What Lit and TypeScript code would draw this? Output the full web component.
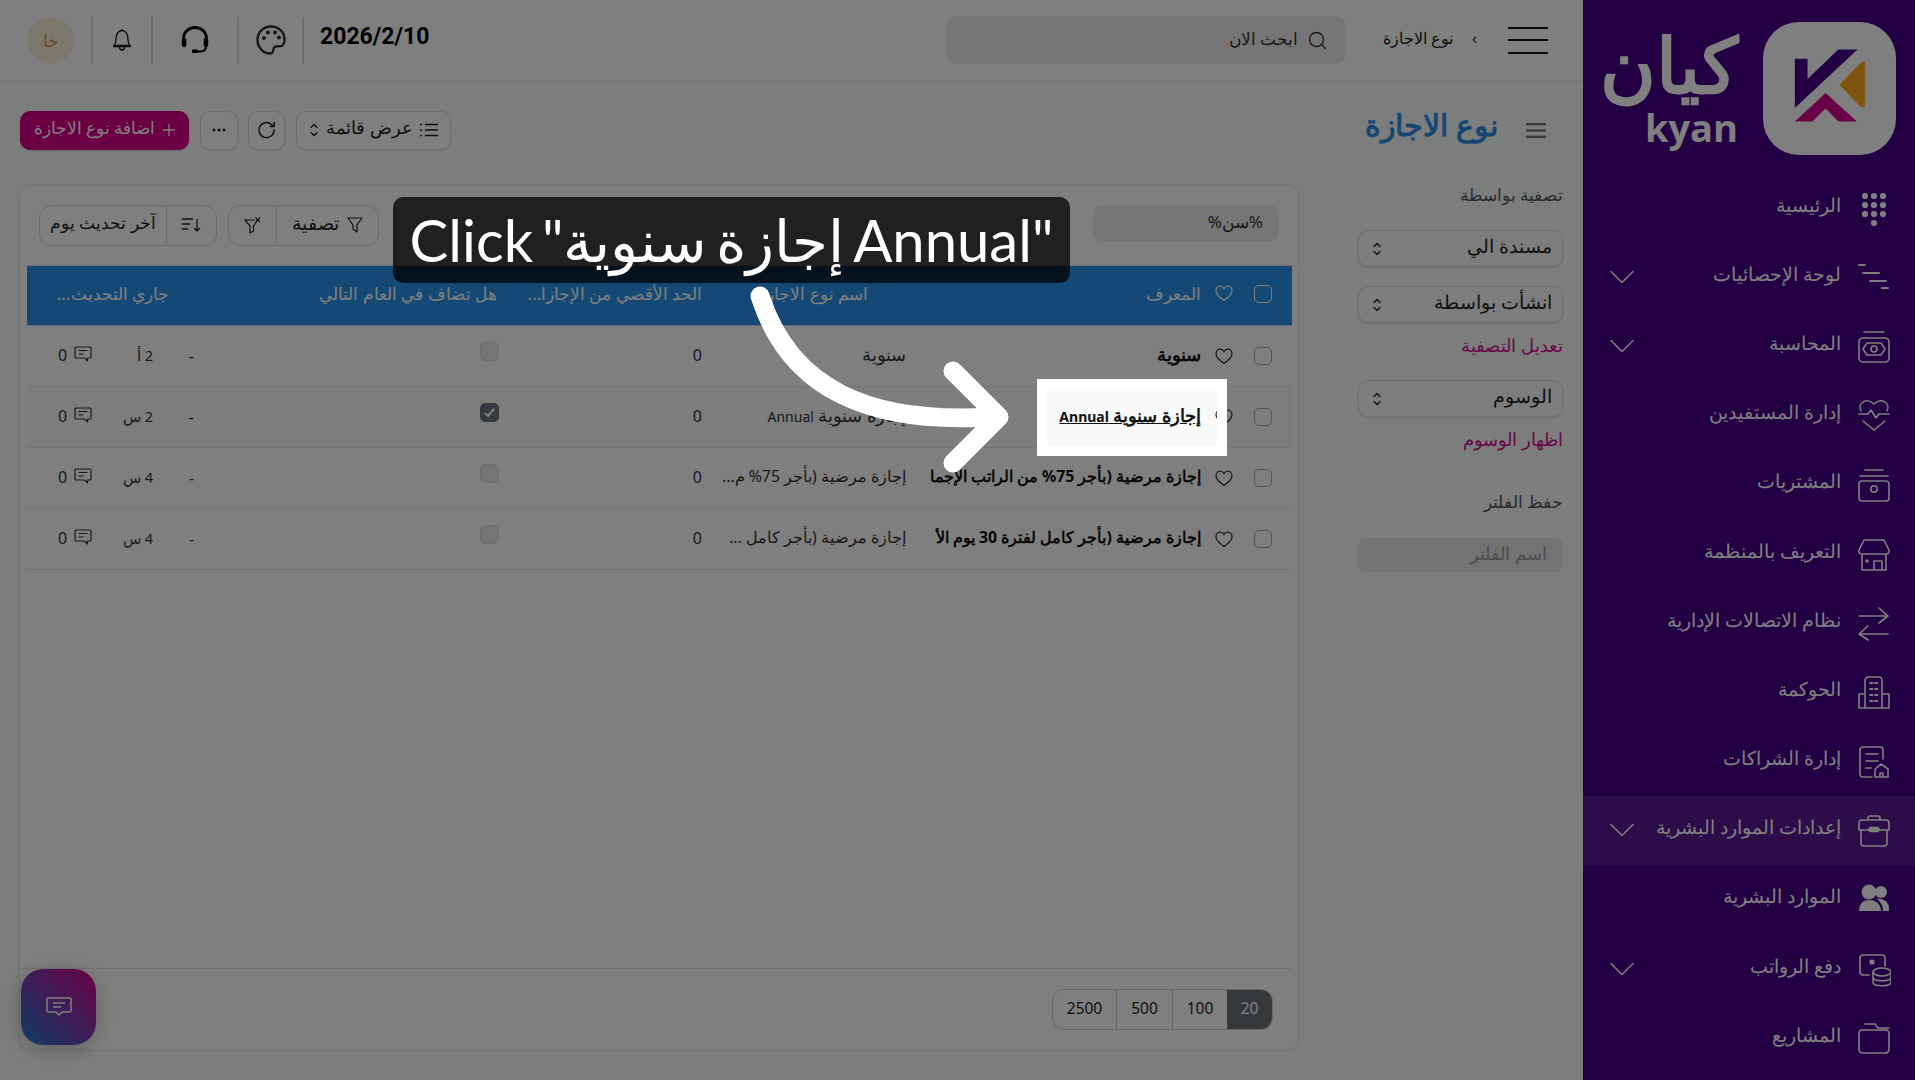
import { LitElement, css, html, svg } from "lit";
import { customElement } from "lit/decorators.js";

const stroke = (body: unknown, size = 36, box = "0 0 36 36") => html`<svg class="ico" width=${size} height=${size} viewBox=${box} fill="none" stroke="currentColor" stroke-width="1.6" stroke-linecap="round" stroke-linejoin="round">${body}</svg>`;

const navIcons: Record<string, unknown> = {
  home: svg`<g fill="currentColor" stroke="none"><circle cx="10" cy="6" r="3.1"/><circle cx="19" cy="6" r="3.1"/><circle cx="28" cy="6" r="3.1"/><circle cx="10" cy="15" r="3.1"/><circle cx="19" cy="15" r="3.1"/><circle cx="28" cy="15" r="3.1"/><circle cx="10" cy="24" r="3.1"/><circle cx="19" cy="24" r="3.1"/><circle cx="28" cy="24" r="3.1"/><circle cx="19" cy="33" r="3.1"/></g>`,
  stats: svg`<path stroke-width="2" d="M4 6h6M8 14h16M15 22h16M27 29h6"/>`,
  cash: svg`<path d="M9 4h20"/><rect x="4" y="10" width="30" height="24" rx="4"/><path d="M12 15h14l4 6-4 6H12l-4-6z"/><circle cx="19" cy="21" r="3"/>`,
  heart: svg`<path d="M6 14C2 6 12 0 19 7c7-7 17-1 13 7M8 24l11 9 11-9"/><path d="M4 17h9l3-4 5 8 3-4h10"/>`,
  purchase: svg`<path d="M10 4h18M5 10h28"/><rect x="4" y="15" width="30" height="20" rx="3"/><circle cx="19" cy="23" r="3.2"/>`,
  store: svg`<path d="M9 4h20l5 10q1 4-4 4H8q-5 0-4-4zM7 18v16h24V18M19 34v-9h8v9"/><circle cx="12" cy="25" r="1" fill="currentColor"/>`,
  arrows: svg`<path d="M4 11h29M24 3l9 8-9 7M33 29H5M13 21l-9 8 9 6"/>`,
  building: svg`<path d="M10 34V7q0-4 4-4h10q3 0 3 4v27M10 20H4v14h30V20h-7"/><path stroke-width="1.8" stroke-dasharray="2.5 2.5" d="M15 9h8M15 15h8M15 21h8M15 27h8"/>`,
  doc: svg`<path d="M17 34H8q-3 0-3-3V7q0-3 3-3h17q3 0 3 3v9M11 11h12M11 18h12M11 25h5"/><path d="M20 34V26l6-5 7 5v8zM25 34v-4h3v4"/>`,
  case: svg`<path d="M13 8V6q0-2 2-2h8q2 0 2 2v2M4 18v-7q0-3 3-3h24q3 0 3 3v7H4zM6 18v13q0 3 3 3h20q3 0 3-3V18"/><rect x="14" y="15.5" width="10" height="4" rx="2" fill="currentColor"/>`,
  users: svg`<g fill="currentColor" stroke="none"><circle cx="14" cy="11" r="7.4"/><circle cx="26" cy="11" r="6"/><path d="M4 30c0-8 5-11 10-11s12 3 12 11z"/><path d="M22 18c6-1 12 3 12 9v3h-6c0-5-2-9-6-12z"/></g>`,
  pay: svg`<path d="M14 24H8q-3 0-3-3V7q0-3 3-3h19q3 0 3 3v8"/><circle cx="17" cy="11" r="1.8" fill="currentColor"/><ellipse cx="27" cy="21" rx="9" ry="4"/><path d="M18 21v10c0 5 18 5 18 0V21M18 26c0 5 18 5 18 0"/>`,
  folder: svg`<path d="M10 4h10l3 4h11M4 14q0-4 3-4h24q3 0 3 4v15q0 4-4 4H8q-4 0-4-4z"/>`,
};

const nav = [
  { label: "الرئيسية", icon: "home" },
  { label: "لوحة الإحصائيات", icon: "stats", more: true },
  { label: "المحاسبة", icon: "cash", more: true },
  { label: "إدارة المستفيدين", icon: "heart" },
  { label: "المشتريات", icon: "purchase" },
  { label: "التعريف بالمنظمة", icon: "store" },
  { label: "نظام الاتصالات الإدارية", icon: "arrows" },
  { label: "الحوكمة", icon: "building" },
  { label: "إدارة الشراكات", icon: "doc" },
  { label: "إعدادات الموارد البشرية", icon: "case", more: true, active: true },
  { label: "الموارد البشرية", icon: "users" },
  { label: "دفع الرواتب", icon: "pay", more: true },
  { label: "المشاريع", icon: "folder" },
];

const annual = html`إجازة سنوية <span class="lat">Annual</span>`;
const rows = [
  { name: "سنوية", type: "سنوية", next: false, age: "2 أ" },
  { name: annual, type: annual, next: true, age: "2 س", hover: true },
  { name: "إجازة مرضية (بأجر 75% من الراتب الإجما", type: "إجازة مرضية (بأجر 75% م...", next: false, age: "4 س", long: true },
  { name: "إجازة مرضية (بأجر كامل لفترة 30 يوم الأ", type: "إجازة مرضية (بأجر كامل ...", next: false, age: "4 س", long: true },
];

const updown = html`<svg class="updown" width="10" height="16" viewBox="0 0 10 16" fill="none" stroke="currentColor" stroke-width="1.4" stroke-linecap="round" stroke-linejoin="round"><path d="M2 5.5l3-3 3 3M2 10.5l3 3 3-3"/></svg>`;
const heart = html`<svg width="18" height="17" viewBox="0 0 18 17" fill="none" stroke="currentColor" stroke-width="1.3"><path d="M9 15.5C4 12 1 9.300 1 5.700 1 3 3 1.200 5.200 1.200 6.800 1.200 8.200 2 9 3.500 9.800 2 11.200 1.200 12.800 1.200 15 1.200 17 3 17 5.700 17 9.300 14 12 9 15.500z"/></svg>`;
const comment = html`<svg width="18" height="17" viewBox="0 0 18 17" fill="none" stroke="currentColor" stroke-width="1.2" stroke-linejoin="round"><path d="M2 1h14q1 0 1 1v9q0 1-1 1h-2.500v3l-3-3H2q-1 0-1-1V2q0-1 1-1z"/><path d="M4.500 4.500h9M4.500 8h5"/></svg>`;

@customElement("app-root")
export class AppRoot extends LitElement {
  static styles = css`
    :host { display: block; width: 1915px; height: 1080px; overflow: hidden; position: relative; font-family: "Noto Sans", "Open Sans", sans-serif; color: #111; }
    .page { display: flex; direction: rtl; height: 1080px; background: #f8fafa; }
    svg { display: block; flex: none; }
    .lat { font-size: 14px; }

    .side { width: 332px; flex: none; background: #470088; color: #fff; }
    .brand { height: 173px; box-sizing: border-box; padding: 22px 19px 0 0; display: flex; gap: 25px; }
    .tile { width: 133px; height: 133px; border-radius: 36px; background: #fff; flex: none; }
    .word { display: flex; flex-direction: column; align-items: flex-start; font-weight: 700; width: 136px; }
    .word b { font-size: 76px; line-height: 92px; height: 88px; margin-top: -4px; }
    .word span { font-size: 38px; line-height: 42px; direction: ltr; font-family: "Open Sans", sans-serif; }
    .item { height: 69.2px; display: flex; align-items: center; padding: 0 24px 0 27px; gap: 14px; font-size: 19px; font-weight: 300; }
    .item > span { margin-bottom: 6px; }
    .item.on { background: rgba(255, 255, 255, 0.1); }
    .item .chev { margin-inline-start: auto; }

    .main { flex: 1; display: flex; flex-direction: column; min-width: 0; }
    .top { height: 80px; flex: none; background: #fff; box-shadow: 0 2px 4px rgba(0, 0, 0, 0.08); display: flex; align-items: center; padding: 0 35px 0 27px; position: relative; }
    .burger { width: 40px; display: flex; flex-direction: column; gap: 10.500px; }
    .burger i { display: block; height: 2px; background: #111; }
    .crumb { width: 162px; box-sizing: border-box; padding: 0 31px 0 0; display: flex; align-items: center; gap: 19px; font-size: 16px; white-space: nowrap; color: #222; }
    .find { width: 399px; height: 48px; border-radius: 10px; background: #ebebeb; display: flex; align-items: center; gap: 10px; padding: 0 19px; box-sizing: border-box; font-size: 16.500px; color: #333; }
    .find span, .crumb span { margin-bottom: 4px; }
    .tools { margin-inline-start: auto; display: flex; align-items: center; }
    .date { font-family: Roboto, sans-serif; font-size: 23px; font-weight: 700; direction: ltr; width: 108px; margin-left: 16px; margin-top: -8px; color: #000; }
    .tool { height: 47px; display: flex; align-items: center; justify-content: center; border-right: 2px solid #d8d8d8; box-sizing: content-box; color: #111; }
    .avatar { width: 47px; height: 47px; border-radius: 50%; background: #fbf0dd; color: #c99a3c; font-size: 17px; display: flex; align-items: center; justify-content: center; margin-right: 17px; }

    .body { flex: 1; display: flex; flex-direction: column; padding: 30px 20px 31px; min-height: 0; }
    .head { display: flex; align-items: center; height: 40px; padding-right: 17px; }
    .menu { color: #777; margin-left: 28px; }
    h1 { margin: -11px 0 0; font-size: 30px; line-height: 40px; font-weight: 700; color: #2c8fe6; white-space: nowrap; }
    .acts { margin-inline-start: auto; display: flex; gap: 10.670px; align-items: center; }
    .btn { height: 39px; border: 1px solid #dedede; border-radius: 10px; background: #fff; display: flex; align-items: center; justify-content: center; box-sizing: border-box; box-shadow: 0 1px 2px rgba(0, 0, 0, 0.12); font-size: 16.500px; color: #222; gap: 8px; }
    .btn span { margin-bottom: 6px; }
    .btn.square { width: 38px; }
    .btn.view { width: 155px; font-size: 18px; gap: 7px; }
    .btn.add { width: 169px; background: #d40086; border-color: #d40086; color: #fff; }

    .split { flex: 1; display: flex; gap: 60px; margin-top: 36px; min-height: 0; }
    .filters { width: 205px; flex: none; font-size: 17px; color: #555; }
    .filters .lab { height: 20px; line-height: 18px; }
    .sel { height: 37px; margin-top: 24px; border: 1px solid #dedede; border-radius: 10px; background: #fafafa; display: flex; align-items: center; justify-content: space-between; padding: 0 10px 0 13px; color: #222; font-size: 18.500px; box-shadow: 0 1px 2px rgba(0, 0, 0, 0.12); box-sizing: border-box; }
    .sel span { margin-bottom: 6px; }
    .sel + .sel { margin-top: 19px; }
    .link { color: #d4108a; height: 20px; line-height: 18px; margin-top: 13px; font-size: 17.500px; }
    .name { height: 34px; border-radius: 8px; background: #e6e7ea; color: #999; margin-top: 25px; display: flex; align-items: center; padding: 0 16px 4px; box-sizing: border-box; font-size: 17.500px; }

    .card { flex: 1; min-width: 0; background: #fff; border-radius: 10px; box-shadow: 0 0 4px rgba(0, 0, 0, 0.12); display: flex; flex-direction: column; padding: 0 6px 0 0; }
    .bar { height: 80px; flex: none; box-sizing: border-box; border-bottom: 1px solid #e6e6e6; display: flex; align-items: center; padding: 0 19px 0 19px; gap: 11px; margin-right: -6px; }
    .q { width: 186px; height: 35px; border-radius: 8px; background: #ececec; display: flex; align-items: center; padding: 0 16px 3px; box-sizing: border-box; font-size: 17px; margin-inline-end: auto; margin-top: -5px; color: #333; }
    .grp { height: 41px; border: 1px solid #d8d8d8; border-radius: 12px; display: flex; box-sizing: border-box; font-size: 16.500px; color: #222; margin-top: -1px; }
    .grp > div { display: flex; align-items: center; justify-content: center; gap: 8px; }
    .grp > div + div { border-right: 1px solid #d8d8d8; }
    .grp span { margin-bottom: 6px; }
    .grp .big { font-size: 18.500px; }
    .grid { display: grid; grid-template-columns: 52px 33px 292px 203px 202px 316px 16px 1fr; margin-left: 7px; }
    .thead { height: 60px; background: #2890ea; color: #fff; align-items: center; font-size: 17px; font-weight: 500; border-bottom: 1px solid #cfd8e0; box-sizing: border-box; }
    .thead > div { padding-bottom: 4px; }
    .tr { height: 61px; border-bottom: 1px solid #e8e8e8; box-sizing: border-box; align-items: center; font-size: 17.500px; color: #333; }
    .tr.long { font-size: 15.800px; }
    .cell { white-space: nowrap; min-width: 0; }
    .tr.hover { background: #f8faf9; }
    .center { display: flex; justify-content: center; }
    .ck { padding-right: 7px; box-sizing: border-box; }
    .box { width: 18px; height: 18px; border: 1.500px solid #a0a4aa; border-radius: 5px; box-sizing: border-box; background: transparent; display: block; }
    .n { padding: 0 6px 4px 0; font-weight: 700; color: #111; }
    .hover .n a { text-decoration: underline; color: #111; }
    .t { padding: 0 9px 4px 0; font-weight: 400; }
    .h2 { padding-right: 47px; }
    .m { padding-right: 10px; font-size: 16px; padding-bottom: 2px; }
    .thead .m { font-size: 16.500px; padding-bottom: 4px; }
    .f { padding-right: 11px; }
    .hf { padding-right: 13px; }
    .chk { width: 19px; height: 19px; border-radius: 5px; background: #e8eaec; border: 1px solid #dcdcdc; box-sizing: border-box; margin-bottom: 10px; display: flex; align-items: center; justify-content: center; }
    .chk.on { background: #6c7280; border-color: #6c7280; }
    .age { display: flex; align-items: center; justify-content: space-between; padding: 0 25px 3px 31px; font-size: 14.500px; }
    .age .cm { display: flex; align-items: center; gap: 7px; font-size: 16px; }
    .hl { padding-right: 9px; }
    .spacer { flex: 1; }
    .foot { height: 80px; flex: none; border-top: 1px solid #e4e4e4; display: flex; align-items: center; padding-right: 19px; }
    .pager { height: 41px; border: 1px solid #cfcfcf; border-radius: 12px; display: flex; overflow: hidden; font-size: 15.500px; color: #222; box-sizing: border-box; }
    .pager div { display: flex; align-items: center; justify-content: center; border-left: 1px solid #cfcfcf; padding-bottom: 2px; box-sizing: border-box; }
    .pager div:last-child { border-left: 0; }
    .pager .cur { background: #6c7278; color: #fff; border: 0; }

    .fab { position: absolute; left: 21px; top: 969px; width: 75px; height: 76px; border-radius: 22px; background: linear-gradient(45deg, #1f78d0, #d4008c); color: #fff; display: flex; align-items: center; justify-content: center; box-shadow: 0 4px 20px rgba(0, 0, 0, 0.25); }

    .spot { position: absolute; left: 1037px; top: 379px; width: 190px; height: 77px; box-sizing: border-box; border: 10px solid #fff; box-shadow: 0 0 0 3000px rgba(0, 0, 0, 0.5); }
    .tip { position: absolute; left: 393px; top: 197px; width: 677px; height: 86px; box-sizing: border-box; border-radius: 10px; background: rgba(0, 0, 0, 0.75); color: #fff; font-family: Lato, sans-serif; font-size: 58px; word-spacing: -6px; display: flex; align-items: center; justify-content: center; white-space: nowrap; }
    .arrow { position: absolute; left: 0; top: 0; pointer-events: none; }
  `;

  render() {
    return html`
      <div class="page">
        <aside class="side">
          <div class="brand">
            <div class="tile">
              <svg width="133" height="133" viewBox="0 0 397 397">
                <polygon fill="#470088" points="95,110 133,110 133,170 225,82 282,82 95,257" />
                <polygon fill="#d4008c" points="95,297 187,212 280,297 225,297 187,258 147,297" />
                <path fill="#ffaa1c" d="M228 187L293 120Q305 112 305 128V240Q305 262 290 252Z" />
              </svg>
            </div>
            <div class="word"><b>كيان</b><span>kyan</span></div>
          </div>
          ${nav.map(
            (n) => html`<div class="item ${n.active ? "on" : ""}">
              ${stroke(navIcons[n.icon])}
              <span>${n.label}</span>
              ${n.more
                ? html`<svg class="chev" width="24" height="14" viewBox="0 0 24 14" fill="none" stroke="currentColor" stroke-width="1.500" stroke-linecap="round" stroke-linejoin="round"><path d="M1 1.500l11 11 11-11" /></svg>`
                : ""}
            </div>`,
          )}
        </aside>

        <div class="main">
          <header class="top">
            <div class="burger"><i></i><i></i><i></i></div>
            <div class="crumb"><span>›</span><span>نوع الاجازة</span></div>
            <div class="find">
              <svg width="19" height="19" viewBox="0 0 19 19" fill="none" stroke="currentColor" stroke-width="1.400" stroke-linecap="round"><circle cx="8.500" cy="8.500" r="7" /><path d="M13.500 13.500l4 4" /></svg>
              <span>ابحث الان</span>
            </div>
            <div class="tools">
              <div class="date">2026/2/10</div>
              <div class="tool" style="width:63px">
                <svg width="30" height="30" viewBox="0 0 30 30" fill="none" stroke="#333" stroke-width="2.400"><path d="M15 1.500C7 1.500 1.500 7.500 1.500 15c0 7.500 6 13.500 12.500 13.500 4 0 3-4 4-6 1.500-2.500 5-.5 7.500-1.500 3-1.200 3-4 3-6.500C28.500 7 22.500 1.500 15 1.500z" /><g fill="#333" stroke="none"><circle cx="8" cy="13" r="2" /><circle cx="12" cy="7.500" r="2" /><circle cx="19" cy="7.500" r="2" /><circle cx="23" cy="12.500" r="2" /></g></svg>
              </div>
              <div class="tool" style="width:84px">
                <svg width="28" height="28" viewBox="0 0 28 28" fill="none" stroke="#000" stroke-width="2.800"><path d="M2.500 18v-5C2.500 6 7.500 1.500 14 1.500S25.500 6 25.500 13v5" /><rect x="0.800" y="12" width="4.500" height="9" rx="2" fill="#000" stroke="none" /><rect x="22.700" y="12" width="4.500" height="9" rx="2" fill="#000" stroke="none" /><path d="M25 20c0 4-3 5.500-6 5.500h-4" stroke-width="2" /><rect x="11" y="23.500" width="6" height="3.500" rx="1" fill="#000" stroke="none" /></svg>
              </div>
              <div class="tool" style="width:58px">
                <svg width="20" height="24" viewBox="0 0 20 24" fill="none" stroke="#111" stroke-width="1.300" stroke-linejoin="round"><path d="M2 17.500c1.500-1.500 2-3 2-6C4 6 6.500 2.500 10 2.500s6 3.500 6 9c0 3 .5 4.500 2 6zM1 18.500h18M7.500 19c0 2 1 3 2.500 3s2.500-1 2.500-3M10 .8v1.700" /></svg>
              </div>
              <div class="tool" style="width:0"></div>
              <div class="avatar">خا</div>
            </div>
          </header>

          <div class="body">
            <div class="head">
              <svg class="menu" width="20" height="15" viewBox="0 0 20 15" fill="currentColor"><rect width="20" height="2.400" /><rect y="6.300" width="20" height="2.400" /><rect y="12.600" width="20" height="2.400" /></svg>
              <h1>نوع الاجازة</h1>
              <div class="acts">
                <div class="btn view">
                  <svg width="18" height="14" viewBox="0 0 18 14" fill="none" stroke="currentColor" stroke-width="1.300"><path d="M5 1.500h13M5 7h13M5 12.500h13M0 1.500h2M0 7h2M0 12.500h2" /></svg>
                  <span>عرض قائمة</span>${updown}
                </div>
                <div class="btn square" style="width:37px">
                  <svg width="18" height="18" viewBox="0 0 18 18" fill="none" stroke="currentColor" stroke-width="1.500" stroke-linecap="round" stroke-linejoin="round"><path d="M16 9a7.500 7.500 0 1 1-2.300-5.300L16 5.500M16.300 1.500v4h-4" /></svg>
                </div>
                <div class="btn square">
                  <svg width="14" height="4" viewBox="0 0 14 4" fill="currentColor"><circle cx="2" cy="2" r="1.500" /><circle cx="7" cy="2" r="1.500" /><circle cx="12" cy="2" r="1.500" /></svg>
                </div>
                <div class="btn add">
                  <svg width="12" height="12" viewBox="0 0 12 12" fill="none" stroke="currentColor" stroke-width="1.300"><path d="M6 0v12M0 6h12" /></svg>
                  <span>اضافة نوع الاجازة</span>
                </div>
              </div>
            </div>

            <div class="split">
              <div class="filters">
                <div class="lab">تصفية بواسطة</div>
                <div class="sel"><span>مسندة الي</span>${updown}</div>
                <div class="sel"><span>انشأت بواسطة</span>${updown}</div>
                <div class="link">تعديل التصفية</div>
                <div class="sel"><span>الوسوم</span>${updown}</div>
                <div class="link">اظهار الوسوم</div>
                <div class="lab" style="margin-top:43px">حفظ الفلتر</div>
                <div class="name">اسم الفلتر</div>
              </div>

              <section class="card">
                <div class="bar">
                  <div class="q">%سن%</div>
                  <div class="grp" style="width:151px">
                    <div style="width:101px">
                      <svg width="16" height="16" viewBox="0 0 16 16" fill="none" stroke="currentColor" stroke-width="1.200" stroke-linejoin="round"><path d="M1 1h14L10 8v7l-4-3V8z" /></svg>
                      <span class="big">تصفية</span>
                    </div>
                    <div style="flex:1">
                      <svg width="17" height="17" viewBox="0 0 17 17" fill="none" stroke="currentColor" stroke-width="1.200" stroke-linejoin="round" stroke-linecap="round"><path d="M1 3h9M1 3l5 6v7l3.500-2V9l3-4M12 1l3.500 3.500M15.500 1L12 4.500" /></svg>
                    </div>
                  </div>
                  <div class="grp" style="width:178px">
                    <div style="width:49px">
                      <svg width="19" height="16" viewBox="0 0 19 16" fill="none" stroke="currentColor" stroke-width="1.300"><path d="M0 2h11M0 7h8M0 12h6M15 2v12M12 11l3 3 3-3" /></svg>
                    </div>
                    <div style="flex:1"><span>آخر تحديث يوم</span></div>
                  </div>
                </div>

                <div class="grid thead">
                  <div class="center ck"><span class="box" style="border-color:#fff"></span></div>
                  <div class="center">${heart}</div>
                  <div class="cell n" style="font-weight:500;color:#fff">المعرف</div>
                  <div class="cell h2">اسم نوع الاجازة</div>
                  <div class="cell m">الحد الأقصي من الإجازا...</div>
                  <div class="cell hf">هل تضاف في العام التالي</div>
                  <div></div>
                  <div class="cell hl">جاري التحديث...</div>
                </div>
                ${rows.map(
                  (r) => html`<div class="grid tr ${r.hover ? "hover" : ""} ${r.long ? "long" : ""}">
                    <div class="center ck"><span class="box"></span></div>
                    <div class="center">${heart}</div>
                    <div class="cell n"><a>${r.name}</a></div>
                    <div class="cell t">${r.type}</div>
                    <div class="cell m">0</div>
                    <div class="f">
                      <div class="chk ${r.next ? "on" : ""}">
                        ${r.next
                          ? html`<svg width="11" height="9" viewBox="0 0 11 9" fill="none" stroke="#fff" stroke-width="2"><path d="M1 5l3 3 6-7" /></svg>`
                          : ""}
                      </div>
                    </div>
                    <div class="dash">-</div>
                    <div class="age"><span>${r.age}</span><span class="cm">${comment}<span>0</span></span></div>
                  </div>`,
                )}
                <div class="spacer"></div>
                <div class="foot">
                  <div class="pager" style="width:221px">
                    <div class="cur" style="width:45px">20</div>
                    <div style="width:55px">100</div>
                    <div style="width:56px">500</div>
                    <div style="flex:1">2500</div>
                  </div>
                </div>
              </section>
            </div>
          </div>
        </div>
      </div>

      <div class="fab">
        <svg width="26" height="20" viewBox="0 0 26 20" fill="none" stroke="currentColor" stroke-width="1.500" stroke-linejoin="round"><path d="M2 1h22q1 0 1 1v12q0 1-1 1h-8l-3 3-3-3H2q-1 0-1-1V2q0-1 1-1z" /><path d="M7 6h12M7 10h8" /></svg>
      </div>

      <div class="spot"></div>
      <svg class="arrow" width="1915" height="1080" viewBox="0 0 1915 1080" fill="none" stroke="#fff" stroke-width="19" stroke-linecap="round" stroke-linejoin="round">
        <path d="M760 296C790 390 870 424 990 417" />
        <path d="M953 371L999 417L953 463" />
      </svg>
      <div class="tip">Click "إجازة سنوية Annual"</div>
    `;
  }
}
